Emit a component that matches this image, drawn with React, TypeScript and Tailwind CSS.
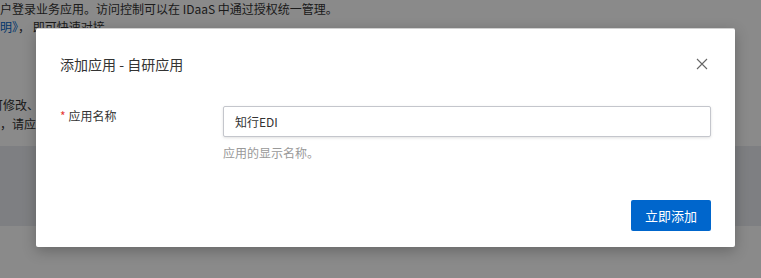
import React from 'react';

const font = { fontFamily: '"Noto Sans CJK SC", "Liberation Sans", sans-serif' };

const BackgroundPage: React.FC = () => (
  <div className="relative h-[278px] w-[761px] overflow-hidden bg-white text-[12px] text-[#333]">
    <div className="flex flex-col">
      <p className="h-[17px] whitespace-nowrap leading-[17px]">
        户登录业务应用。访问控制可以在 IDaaS 中通过授权统一管理。
      </p>
      <p className="h-[20px] whitespace-nowrap leading-[20px]">
        <span className="text-[#0064c8]">明》</span>， 即可快速对接
      </p>
      <div className="mt-[58px] flex flex-col">
        <p className="-ml-[9px] whitespace-nowrap leading-[19px]">可修改、</p>
        <p className="whitespace-nowrap leading-[19px]">，请应</p>
      </div>
      <div className="mt-[13px] h-[80px] bg-[#e9ebf0]" />
    </div>
  </div>
);

const AddAppModal: React.FC = () => (
  <div className="absolute left-[36px] top-[28px] flex h-[219px] w-[699px] flex-col rounded-[2px] border-t border-[#d0d0d0] bg-white shadow-[0_4px_14px_rgba(0,0,0,0.25)]">
    <div className="flex items-center justify-between px-6 pt-[25px]">
      <h3 className="text-[14px] leading-[20px] text-[#333]">添加应用 - 自研应用</h3>
      <button className="mr-[1px] flex h-4 w-4 items-center justify-center text-[#666]">
        <svg width="12" height="12" viewBox="0 0 12 12" fill="none" stroke="currentColor" strokeWidth="1.1">
          <path d="M1 1L11 11M11 1L1 11" />
        </svg>
      </button>
    </div>

    <div className="mt-[32px] flex px-6">
      <label className="w-[163px] shrink-0 text-[12px] leading-[20px] text-[#333]">
        <span className="mr-[3px] text-[#e53935]">*</span>应用名称
      </label>
      <div className="flex flex-1 flex-col">
        <div className="flex h-[31px] items-center rounded-[2px] border border-[#c4c6cc] bg-white pl-[11px] shadow-[0_1px_3px_rgba(0,0,0,0.12)]">
          <span className="text-[12px] text-[#333]">知行EDI</span>
        </div>
        <p className="mt-[7px] text-[12px] leading-[18px] text-[#999]">应用的显示名称。</p>
      </div>
    </div>

    <div className="mt-auto flex justify-end px-6 pb-4">
      <button className="h-[31px] w-[80px] rounded-[2px] bg-[#0066cc] text-[13px] text-white">立即添加</button>
    </div>
  </div>
);

export default function App() {
  return (
    <div className="relative h-[278px] w-[761px] overflow-hidden" style={font}>
      <BackgroundPage />
      <div className="absolute inset-0 bg-black/[0.46]" />
      <AddAppModal />
    </div>
  );
}
